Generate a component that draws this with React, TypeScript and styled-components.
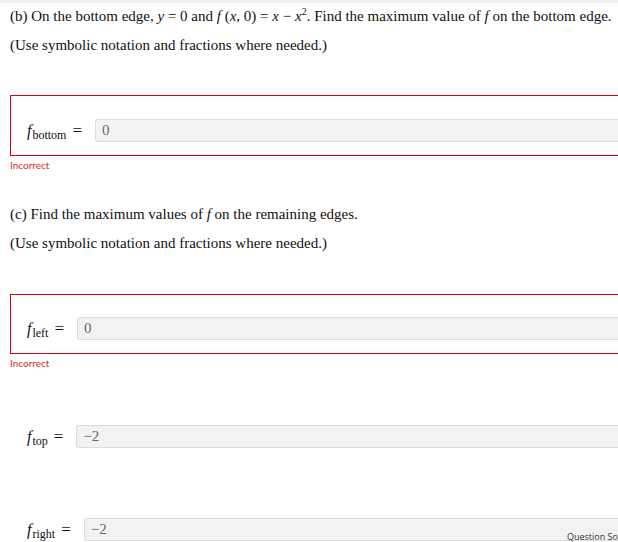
import styled, { createGlobalStyle } from 'styled-components';

const GlobalStyle = createGlobalStyle`
  html, body {
    margin: 0;
    padding: 0;
    background: #fff;
  }
`;

const Page = styled.div`
  position: relative;
  width: 618px;
  height: 542px;
  overflow: hidden;
  background: #fff;
`;

const TopStrip = styled.div`
  height: 3px;
  background: #f1f1f1;
`;

const Content = styled.div`
  padding-left: 10px;
  width: 660px;
`;

const Prompt = styled.p<{ $top: number }>`
  margin: ${({ $top }) => $top}px 0 0;
  font-family: 'Liberation Serif', 'Times New Roman', serif;
  font-size: 15px;
  line-height: 18px;
  color: #111;
  white-space: nowrap;
`;

const Mi = styled.i`
  font-style: italic;
`;

const Sup = styled.sup`
  font-size: 10px;
  line-height: 0;
`;

const AnswerBlock = styled.div<{ $wrong?: boolean; $top: number; $padTop: number }>`
  margin-top: ${({ $top }) => $top}px;
  border: 1px solid ${({ $wrong }) => ($wrong ? '#d0021b' : 'transparent')};
  border-right: none;
  padding: ${({ $padTop }) => $padTop}px 0 13px 16px;
  display: flex;
  align-items: center;
`;

const Label = styled.span`
  font-family: 'Liberation Serif', 'Times New Roman', serif;
  font-size: 15px;
  color: #111;
  white-space: nowrap;
  display: inline-flex;
  align-items: baseline;
`;

const FuncName = styled.i`
  font-style: italic;
  font-size: 16px;
`;

const Sub = styled.span`
  font-size: 12px;
  position: relative;
  top: 3px;
  margin-left: 1px;
`;

const Equals = styled.span`
  font-size: 17px;
  margin: 0 13px 0 6px;
`;

const AnswerInput = styled.div`
  flex: 1;
  height: 23px;
  box-sizing: border-box;
  border: 1px solid #dcdcdc;
  border-right: none;
  border-radius: 3px 0 0 3px;
  background: #f2f2f2;
  padding-left: 6px;
  font-family: 'Liberation Serif', 'Times New Roman', serif;
  font-size: 15px;
  line-height: 21px;
  color: #666;
`;

const Feedback = styled.div`
  margin-top: 3px;
  font-family: Lato, 'Open Sans', sans-serif;
  font-size: 10px;
  line-height: 12px;
  color: #e0292c;
`;

const SourceTab = styled.div`
  position: absolute;
  left: 567px;
  top: 530px;
  font-family: 'Open Sans', 'Liberation Sans', sans-serif;
  font-size: 9px;
  color: #333;
  white-space: nowrap;
`;

type AnswerProps = {
  name: string;
  value: string;
  wrong?: boolean;
  top: number;
  padTop?: number;
};

function Answer({ name, value, wrong, top, padTop = 22 }: AnswerProps) {
  return (
    <>
      <AnswerBlock $wrong={wrong} $top={top} $padTop={padTop}>
        <Label>
          <FuncName>f</FuncName>
          <Sub>{name}</Sub>
          <Equals>=</Equals>
        </Label>
        <AnswerInput>{value}</AnswerInput>
      </AnswerBlock>
      {wrong && <Feedback>Incorrect</Feedback>}
    </>
  );
}

export default function App() {
  return (
    <Page>
      <GlobalStyle />
      <TopStrip />
      <Content>
        <Prompt $top={4}>
          (b) On the bottom edge, <Mi>y</Mi> = 0 and <Mi>f</Mi> (<Mi>x</Mi>, 0) = <Mi>x</Mi> − <Mi>x</Mi>
          <Sup>2</Sup>. Find the maximum value of <Mi>f</Mi> on the bottom edge.
        </Prompt>
        <Prompt $top={11}>(Use symbolic notation and fractions where needed.)</Prompt>
        <Answer name="bottom" value="0" wrong top={41} padTop={23} />
        <Prompt $top={34}>
          (c) Find the maximum values of <Mi>f</Mi> on the remaining edges.
        </Prompt>
        <Prompt $top={11}>(Use symbolic notation and fractions where needed.)</Prompt>
        <Answer name="left" value="0" wrong top={42} />
        <Answer name="top" value="−2" top={33} />
        <Answer name="right" value="−2" top={33} />
      </Content>
      <SourceTab>Question Source</SourceTab>
    </Page>
  );
}
